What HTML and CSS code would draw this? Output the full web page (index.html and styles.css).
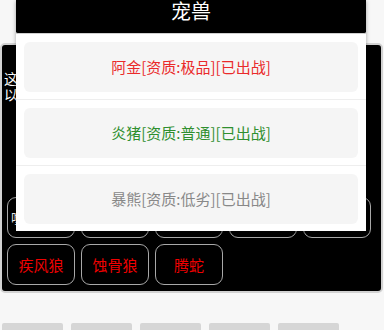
FILE: index.html
```html
<!DOCTYPE html>
<html lang="zh">
<head>
<meta charset="utf-8">
<link rel="stylesheet" href="styles.css">
</head>
<body>
<div class="page">
  <div class="panel">
    <div class="intro">
      <div>这里是你的宠兽栏，点击宠兽可以查看详情</div>
      <div>以下是你当前拥有的全部宠兽</div>
    </div>
    <div class="grid">
      <div class="cell white">噬魂妖狼</div>
      <div class="cell">阿金</div>
      <div class="cell">炎猪</div>
      <div class="cell">暴熊</div>
      <div class="cell">火狐</div>
      <div class="cell">疾风狼</div>
      <div class="cell">蚀骨狼</div>
      <div class="cell">腾蛇</div>
    </div>
  </div>
  <div class="tabs">
    <div class="tab"></div>
    <div class="tab"></div>
    <div class="tab"></div>
    <div class="tab"></div>
    <div class="tab"></div>
  </div>
</div>
<div class="modal">
  <div class="modal-head">宠兽</div>
  <div class="item"><div class="card red">阿金[资质:极品][已出战]</div></div>
  <div class="item"><div class="card green">炎猪[资质:普通][已出战]</div></div>
  <div class="item last"><div class="card gray">暴熊[资质:低劣][已出战]</div></div>
</div>
</body>
</html>
```
FILE: styles.css
```css
html, body {
  margin: 0;
  padding: 0;
}
body {
  background: #f7f7f7;
  font-family: "Noto Sans CJK SC", "Noto Sans", sans-serif;
  width: 384px;
  height: 330px;
  overflow: hidden;
  position: relative;
}
.page {
  padding-top: 43px;
}
.panel {
  width: 383px;
  height: 250px;
  box-sizing: border-box;
  background: #000;
  border: 2px solid #d2d2d2;
  border-radius: 5px;
  padding: 0 0 0 5px;
}
.intro {
  color: #fff;
  font-size: 14px;
  line-height: 16px;
  padding-top: 25px;
  margin-left: -3px;
  white-space: nowrap;
  overflow: hidden;
  height: 32px;
}
.grid {
  margin-top: 95px;
  display: grid;
  grid-template-columns: repeat(5, 68px);
  grid-auto-rows: 41px;
  gap: 6px;
}
.cell {
  box-sizing: border-box;
  border: 1.5px solid #a8a8a8;
  border-radius: 9px;
  color: #f00000;
  font-size: 15px;
  display: flex;
  align-items: center;
  justify-content: center;
  white-space: nowrap;
}
.cell.white {
  color: #eee;
}
.tabs {
  display: flex;
  gap: 8px;
  margin-top: 30px;
  padding-left: 2px;
}
.tab {
  width: 61px;
  height: 20px;
  background: #d6d6d6;
  border-radius: 2px 2px 0 0;
}
.modal {
  position: absolute;
  left: 16px;
  top: 0;
  width: 350px;
  background: #fff;
  box-shadow: 0 1px 4px rgba(0, 0, 0, 0.35);
}
.modal-head {
  height: 34px;
  box-sizing: border-box;
  background: #000;
  color: #fff;
  font-size: 20px;
  line-height: 20px;
  padding-top: 1px;
  text-align: center;
  border-bottom: 1px solid #cfcfcf;
  border-radius: 0 0 2px 2px;
}
.item {
  padding: 8px 8px 7px;
  border-bottom: 1px solid #eeeeee;
}
.item.last {
  border-bottom: none;
}
.card {
  height: 50px;
  background: #f5f5f5;
  border-radius: 6px;
  font-size: 15px;
  line-height: 50px;
  text-align: center;
}
.red { color: #ea2a2a; }
.green { color: #2f8f2f; }
.gray { color: #888888; }
```
